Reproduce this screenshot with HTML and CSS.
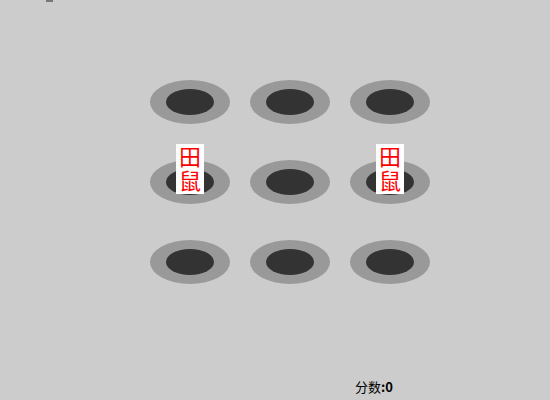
FILE: index.html
```html
<!DOCTYPE html>
<html>
<head>
<meta charset="utf-8">
<link rel="stylesheet" href="styles.css">
</head>
<body>
<div class="page">
  <div class="mark"></div>
  <div class="board">
    <div class="hole"><div class="pit"></div></div>
    <div class="hole"><div class="pit"></div></div>
    <div class="hole"><div class="pit"></div></div>
    <div class="hole"><div class="pit"></div><div class="mole">田鼠</div></div>
    <div class="hole"><div class="pit"></div></div>
    <div class="hole"><div class="pit"></div><div class="mole">田鼠</div></div>
    <div class="hole"><div class="pit"></div></div>
    <div class="hole"><div class="pit"></div></div>
    <div class="hole"><div class="pit"></div></div>
  </div>
  <div class="score">分数<b>:0</b></div>
</div>
</body>
</html>
```
FILE: styles.css
```css
html, body {
  margin: 0;
  padding: 0;
  background: #cccccc;
}
.page {
  position: relative;
  width: 550px;
  height: 400px;
  overflow: hidden;
  font-family: "Noto Sans CJK SC", "DejaVu Sans", sans-serif;
}
.mark {
  position: absolute;
  left: 46px;
  top: 0;
  width: 7px;
  height: 2px;
  background: #777;
}
.board {
  padding: 80px 0 0 150px;
  display: grid;
  grid-template-columns: repeat(3, 80px);
  grid-auto-rows: 44px;
  column-gap: 20px;
  row-gap: 36px;
}
.hole {
  position: relative;
  width: 80px;
  height: 44px;
  border-radius: 50%;
  background: #999999;
  display: flex;
  align-items: center;
  justify-content: center;
}
.pit {
  width: 48px;
  height: 26px;
  border-radius: 50%;
  background: #333333;
}
.mole {
  position: absolute;
  left: 26px;
  top: -16px;
  width: 28px;
  height: 50px;
  background: #ffffff;
  color: #ff0000;
  font-family: "Noto Sans CJK SC", sans-serif;
  font-size: 22px;
  letter-spacing: 2px;
  white-space: nowrap;
  writing-mode: vertical-rl;
  text-orientation: upright;
  line-height: 28px;
  padding-top: 2px;
  box-sizing: border-box;
}
.score {
  position: absolute;
  left: 355px;
  top: 378px;
  font-size: 13px;
  line-height: 18px;
  color: #000;
}
.score b {
  font-weight: 700;
}
```
